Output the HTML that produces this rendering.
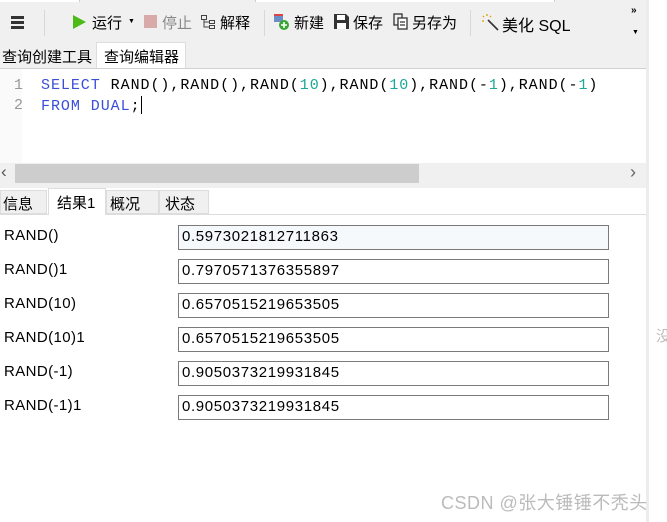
<!DOCTYPE html>
<html><head><meta charset="utf-8"><style>
*{margin:0;padding:0;box-sizing:border-box}
body{width:667px;height:522px;background:#fff;position:relative;overflow:hidden;font-family:"Liberation Sans","Noto Sans CJK SC",sans-serif;font-size:15px;color:#000}
.a{position:absolute;white-space:nowrap}
.sep{position:absolute;top:10px;width:1px;height:26px;background:#d8d8d8}
.mono{font-family:"Liberation Mono","DejaVu Sans Mono",monospace;font-size:15px;letter-spacing:0.95px}
.kw{color:#3a4fd8}.num{color:#1aa898}
.box{position:absolute;left:178px;width:431px;height:25px;border:1px solid #7a7a7a;padding:2px 0 0 3px;font-size:15px;letter-spacing:0.65px}
.lbl{position:absolute;left:4px;font-size:15px;letter-spacing:0.4px}
</style></head><body>
<div class="a" style="left:0;top:0;width:646px;height:188px;background:#f0f0f0"></div>
<div class="a" style="left:0;top:0;width:80px;height:2px;background:#fff;border-right:1px solid #ccc"></div>
<div class="a" style="left:255px;top:0;width:300px;height:2px;background:#fff;border-left:1px solid #ccc;border-right:1px solid #ccc"></div>
<div class="a" style="left:646px;top:0;width:3px;height:522px;background:#ececec"></div>
<!-- toolbar -->
<div class="a" style="left:11px;top:16px;width:13px;height:3px;background:#333;box-shadow:0 5px 0 #333,0 10px 0 #333"></div>
<div class="sep" style="left:44px"></div>
<svg class="a" style="left:73px;top:15px" width="13" height="14"><path d="M0 0L13 7L0 14Z" fill="#4cbb17"/></svg>
<div class="a" style="left:92px;top:12px">运行</div>
<div class="a" style="left:128px;top:18px;font-size:7px">▼</div>
<div class="a" style="left:144px;top:15px;width:13px;height:13px;background:#d8aaaa"></div>
<div class="a" style="left:162px;top:12px;color:#888">停止</div>
<svg class="a" style="left:200px;top:14px" width="16" height="16"><g fill="none" stroke="#444"><rect x="1.5" y="1.5" width="5" height="4"/><rect x="9.5" y="6.5" width="5" height="3"/><rect x="9.5" y="11.5" width="5" height="3"/><path d="M4 6v7h5M4 8h5"/></g></svg>
<div class="a" style="left:220px;top:12px">解释</div>
<div class="sep" style="left:264px"></div>
<svg class="a" style="left:274px;top:13px" width="16" height="18"><rect x="0" y="1" width="9" height="8" fill="#6a8fc8"/><rect x="0" y="1" width="9" height="2" fill="#d44"/><circle cx="10" cy="12" r="5" fill="#3aa632"/><path d="M7 12h6M10 9v6" stroke="#fff" stroke-width="1.6"/></svg>
<div class="a" style="left:294px;top:12px">新建</div>
<svg class="a" style="left:334px;top:14px" width="15" height="15"><path d="M0 0h12l3 3v12H0Z" fill="#333"/><rect x="3" y="1" width="8" height="5" fill="#fff"/><rect x="3" y="9" width="9" height="6" fill="#fff"/></svg>
<div class="a" style="left:353px;top:12px">保存</div>
<svg class="a" style="left:393px;top:13px" width="16" height="17"><g fill="none" stroke="#333" stroke-width="1.3"><rect x="1" y="1" width="8" height="11"/><rect x="5" y="5" width="9" height="11" fill="#fff"/><path d="M7 9h5M7 12h5"/></g></svg>
<div class="a" style="left:412px;top:12px">另存为</div>
<div class="sep" style="left:470px"></div>
<svg class="a" style="left:481px;top:13px" width="18" height="18"><path d="M7 7L17 17" stroke="#333" stroke-width="1.6"/><path d="M2 3l1 1M6 1v2M1 8h2M10 3l-1 1" stroke="#e0a000" stroke-width="1.3"/></svg>
<div class="a" style="left:502px;top:12px;font-size:16px">美化 SQL</div>
<div class="a" style="left:631px;top:5px;font-size:10px;font-weight:bold">»</div>
<div class="a" style="left:632px;top:29px;font-size:7px">▼</div>
<!-- tabs -->
<div class="a" style="left:2px;top:44px;width:93px;height:24px;background:#f0f0f0;padding-top:2px">查询创建工具</div>
<div class="a" style="left:96px;top:42px;width:90px;height:26px;background:#fff;border:1px solid #ddd;border-bottom:none;padding:3px 0 0 7px">查询编辑器</div>
<div class="a" style="left:0;top:68px;width:646px;height:95px;background:#fff;border-top:1px solid #d0d0d0"></div>
<div class="a" style="left:0;top:69px;width:22px;height:94px;background:#fafafa"></div>
<div class="a mono" style="left:14px;top:76px;color:#999;line-height:20px">1<br>2</div>
<div class="a mono" style="left:41px;top:76px;line-height:20px"><span class="kw">SELECT</span> RAND(),RAND(),RAND(<span class="num">10</span>),RAND(<span class="num">10</span>),RAND(-<span class="num">1</span>),RAND(-<span class="num">1</span>)<br><span class="kw">FROM DUAL</span>;<span style="display:inline-block;width:1px;height:18px;background:#000;vertical-align:-4px"></span></div>
<!-- scrollbar -->
<div class="a" style="left:15px;top:164px;width:404px;height:19px;background:#cdcdcd"></div>
<div class="a" style="left:1px;top:162px;color:#555;font-size:17px">‹</div>
<div class="a" style="left:630px;top:162px;color:#666;font-size:18px">›</div>
<!-- result tabs -->
<div class="a" style="left:0;top:188px;width:646px;height:334px;background:#fff"></div>
<div class="a" style="left:0;top:214px;width:646px;height:1px;background:#ddd"></div>
<div class="a" style="left:0;top:190px;width:47px;height:24px;background:#f0f0f0;border:1px solid #ddd;padding:2px 0 0 2px">信息</div>
<div class="a" style="left:48px;top:188px;width:58px;height:27px;background:#fff;border:1px solid #ddd;border-bottom:none;padding:3px 0 0 8px">结果1</div>
<div class="a" style="left:106px;top:190px;width:53px;height:24px;background:#f0f0f0;border:1px solid #ddd;padding:2px 0 0 3px">概况</div>
<div class="a" style="left:159px;top:190px;width:50px;height:24px;background:#f0f0f0;border:1px solid #ddd;padding:2px 0 0 5px">状态</div>
<div class="lbl" style="top:227px">RAND()</div><div class="box" style="top:225px;background:#f5f9fc">0.5973021812711863</div>
<div class="lbl" style="top:261px">RAND()1</div><div class="box" style="top:259px">0.7970571376355897</div>
<div class="lbl" style="top:295px">RAND(10)</div><div class="box" style="top:293px">0.6570515219653505</div>
<div class="lbl" style="top:329px">RAND(10)1</div><div class="box" style="top:327px">0.6570515219653505</div>
<div class="lbl" style="top:363px">RAND(-1)</div><div class="box" style="top:361px">0.9050373219931845</div>
<div class="lbl" style="top:397px">RAND(-1)1</div><div class="box" style="top:395px">0.9050373219931845</div>
<div class="a" style="left:656px;top:325px;color:#bbb;font-size:15px">没</div>
<div class="a" style="left:441px;top:489px;color:#bbb;font-size:18px;letter-spacing:0.5px">CSDN @张大锤锤不秃头</div>
</body></html>
